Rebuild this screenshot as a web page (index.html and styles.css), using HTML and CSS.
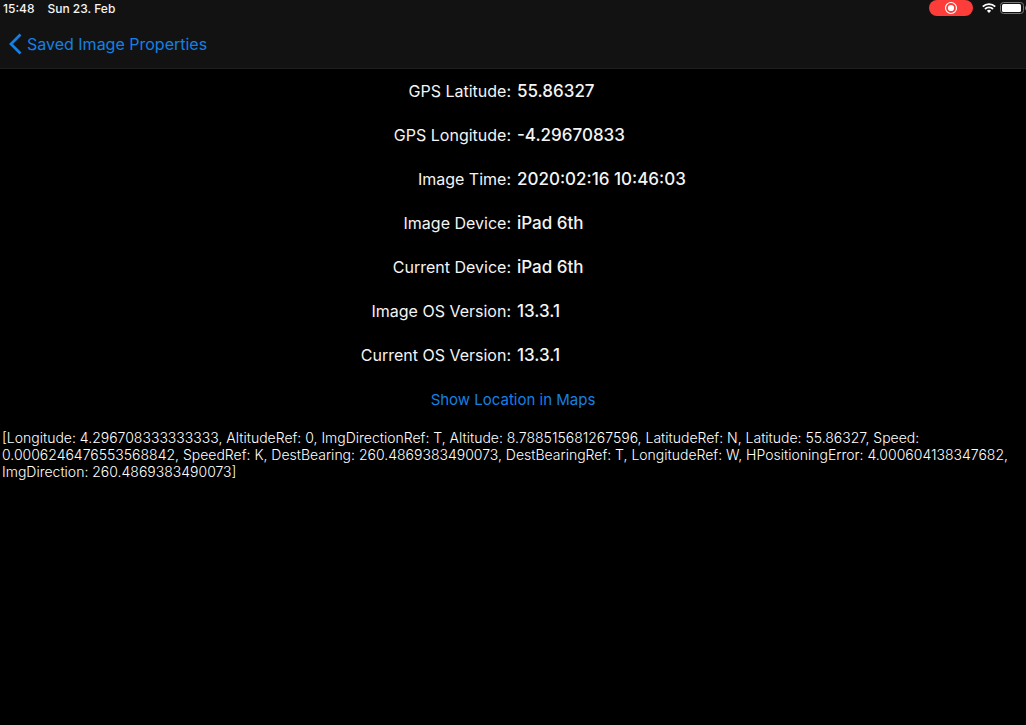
FILE: index.html
```html
<!DOCTYPE html>
<html lang="en">
<head>
    <meta charset="UTF-8">
    <meta name="viewport" content="width=device-width, initial-scale=1.0">
    <title>Image Properties</title>
    <link rel="stylesheet" href="styles.css">
</head>
<body>
    <header class="top">
        <div class="status-bar">
            <span class="time">15:48</span>
            <span class="date">Sun 23. Feb</span>
            <div class="status-icons">
                <span class="recording">
                    <svg width="14" height="14" viewBox="0 0 14 14" aria-hidden="true">
                        <circle cx="7" cy="7" r="5.5" fill="none" stroke="#fff" stroke-width="1.2"/>
                        <circle cx="7" cy="7" r="3.1" fill="#fff"/>
                    </svg>
                </span>
                <svg class="wifi" width="14" height="10" viewBox="0 0 14 10" aria-hidden="true">
                    <path d="M0.8 3.7a8.8 8.8 0 0 1 12.4 0M3 6a5.7 5.7 0 0 1 8 0" fill="none" stroke="#fff" stroke-width="1.8"/>
                    <path d="M7 9.9 4.9 7.8a3 3 0 0 1 4.2 0z" fill="#fff"/>
                </svg>
                <svg class="battery" width="26" height="12" viewBox="0 0 26 12" aria-hidden="true">
                    <rect x="0.5" y="0.5" width="23" height="11" rx="3" fill="none" stroke="#77777a"/>
                    <rect x="2" y="2" width="19" height="8" rx="1.5" fill="#fff"/>
                    <path d="M25 4a2.2 2.2 0 0 1 0 4z" fill="#77777a"/>
                </svg>
            </div>
        </div>
        <nav class="nav-bar">
            <a class="back" href="#">
                <svg width="13" height="22" viewBox="0 0 13 22" aria-hidden="true">
                    <path d="M11.5 1.5 2 11l9.5 9.5" fill="none" stroke="currentColor" stroke-width="2.8"/>
                </svg>
                Saved Image Properties
            </a>
        </nav>
    </header>

    <main>
        <table class="properties">
            <tr><th scope="row">GPS Latitude:</th><td>55.86327</td></tr>
            <tr><th scope="row">GPS Longitude:</th><td>-4.29670833</td></tr>
            <tr><th scope="row">Image Time:</th><td>2020:02:16 10:46:03</td></tr>
            <tr><th scope="row">Image Device:</th><td>iPad 6th</td></tr>
            <tr><th scope="row">Current Device:</th><td>iPad 6th</td></tr>
            <tr><th scope="row">Image OS Version:</th><td>13.3.1</td></tr>
            <tr><th scope="row">Current OS Version:</th><td>13.3.1</td></tr>
        </table>
        <button class="maps-btn" type="button">Show Location in Maps</button>
        <p class="raw-data">[Longitude: 4.296708333333333, AltitudeRef: 0, ImgDirectionRef: T, Altitude: 8.788515681267596, LatitudeRef: N, Latitude: 55.86327, Speed: 0.0006246476553568842, SpeedRef: K, DestBearing: 260.4869383490073, DestBearingRef: T, LongitudeRef: W, HPositioningError: 4.000604138347682, ImgDirection: 260.4869383490073]</p>
    </main>
</body>
</html>
```
FILE: styles.css
```css
body {
    margin: 0;
    background-color: #000;
    color: #f4f4f4;
    font-family: Inter, 'Liberation Sans', sans-serif;
    font-size: 16px;
}

.top {
    background-color: #121212;
    border-bottom: 1px solid #1e1e1e;
}

.status-bar {
    display: flex;
    align-items: center;
    height: 16px;
    padding-left: 3px;
    font-size: 12px;
    font-weight: 500;
}

.date {
    margin-left: 13px;
}

.status-icons {
    display: flex;
    align-items: center;
    margin-left: auto;
}

.recording {
    display: flex;
    align-items: center;
    justify-content: center;
    width: 44px;
    height: 16px;
    border-radius: 8px;
    background-color: #fc3d39;
}

.wifi {
    margin-left: 9px;
}

.battery {
    margin-left: 4px;
}

.nav-bar {
    display: flex;
    align-items: center;
    height: 52px;
    padding: 0 9px;
}

.back {
    display: flex;
    align-items: center;
    gap: 5px;
    padding-top: 3px;
    color: #1580e4;
    text-decoration: none;
}

/* Label on the left half, value on the right half */
.properties {
    width: 100%;
    table-layout: fixed;
    border-collapse: collapse;
}

.properties th,
.properties td {
    width: 50%;
    height: 44px;
    box-sizing: border-box;
    padding: 0 2px;
    line-height: 20px;
}

.properties th {
    font-weight: 400;
    text-align: right;
}

.properties td {
    padding-left: 4px;
    font-size: 17px;
    font-weight: 500;
}

.maps-btn {
    display: block;
    height: 44px;
    margin: 0 auto;
    padding: 0;
    border: none;
    background: none;
    color: #1580e4;
    font-family: inherit;
    font-size: 15px;
    cursor: pointer;
}

.raw-data {
    margin: 8px 0 0 2px;
    color: #fff;
    font-size: 14px;
    font-weight: 300;
    line-height: 17px;
}
```
